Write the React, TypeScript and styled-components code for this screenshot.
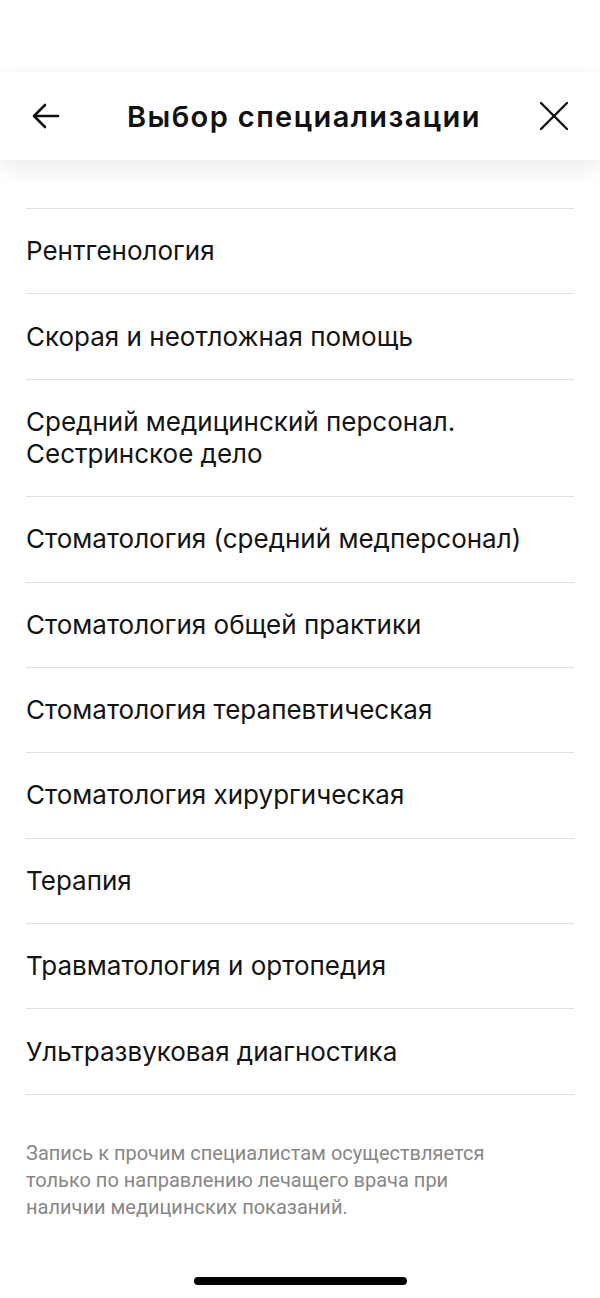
import React from "react";
import styled, { createGlobalStyle } from "styled-components";

const Global = createGlobalStyle`
  html, body { margin: 0; padding: 0; background: #fff; }
  body { font-family: Inter, "Noto Sans", sans-serif; color: #111; }
`;

const Screen = styled.div`
  width: 600px;
  height: 1298px;
  display: flex;
  flex-direction: column;
  background: #fff;
  overflow: hidden;
`;

const StatusSpace = styled.div`
  height: 72px;
  flex: none;
`;

const Header = styled.header`
  height: 88px;
  flex: none;
  display: flex;
  align-items: center;
  justify-content: space-between;
  padding: 0 30px 0 30px;
  background: #fff;
  box-shadow: 0 10px 22px rgba(0, 0, 0, 0.07), 0 -2px 8px rgba(0, 0, 0, 0.02);
  position: relative;
  z-index: 1;
`;

const IconButton = styled.button`
  width: 32px;
  height: 32px;
  padding: 0;
  border: 0;
  background: none;
  display: flex;
  align-items: center;
  justify-content: center;
  color: #111;
`;

const Title = styled.h1`
  margin: 0 0 0 8px;
  font-family: Inter, "Open Sans", sans-serif;
  font-weight: 600;
  font-size: 29px;
  letter-spacing: 1.4px;
  color: #111;
`;

const List = styled.ul`
  list-style: none;
  margin: 48px 26px 0;
  padding: 0;
  border-top: 1px solid #e0e0e0;
`;

const Item = styled.li`
  box-sizing: border-box;
  padding: 26.2px 0;
  display: flex;
  align-items: center;
  border-bottom: 1px solid #e0e0e0;
  font-size: 26px;
  line-height: 32px;
  color: #141414;
`;

const Note = styled.p`
  margin: 45px 80px 0 26px;
  font-family: Roboto, "Noto Sans", sans-serif;
  font-size: 20px;
  line-height: 27px;
  color: #878787;
`;

const Spacer = styled.div`
  flex: 1;
`;

const HomeBar = styled.div`
  align-self: center;
  width: 213px;
  height: 8px;
  border-radius: 4px;
  background: #000;
  margin-bottom: 13px;
`;

const items = [
  "Рентгенология",
  "Скорая и неотложная помощь",
  "Средний медицинский персонал.\nСестринское дело",
  "Стоматология (средний медперсонал)",
  "Стоматология общей практики",
  "Стоматология терапевтическая",
  "Стоматология хирургическая",
  "Терапия",
  "Травматология и ортопедия",
  "Ультразвуковая диагностика",
];

export default function App() {
  return (
    <Screen>
      <Global />
      <StatusSpace />
      <Header>
        <IconButton aria-label="Назад">
          <svg width="28" height="26" viewBox="0 0 28 26" fill="none" stroke="#111" strokeWidth="2.6" strokeLinecap="round" strokeLinejoin="round">
            <path d="M26 13H3" />
            <path d="M13 2L2 13l11 11" />
          </svg>
        </IconButton>
        <Title>Выбор специализации</Title>
        <IconButton aria-label="Закрыть">
          <svg width="30" height="30" viewBox="0 0 30 30" fill="none" stroke="#111" strokeWidth="2.4" strokeLinecap="round">
            <path d="M2 2l26 26" />
            <path d="M28 2L2 28" />
          </svg>
        </IconButton>
      </Header>
      <List>
        {items.map((t) => (
          <Item key={t}>
            <span>
              {t.split("\n").map((line, i) => (
                <React.Fragment key={i}>
                  {i > 0 && <br />}
                  {line}
                </React.Fragment>
              ))}
            </span>
          </Item>
        ))}
      </List>
      <Note>
        Запись к прочим специалистам осуществляется только по направлению лечащего врача при наличии медицинских показаний.
      </Note>
      <Spacer />
      <HomeBar />
    </Screen>
  );
}
